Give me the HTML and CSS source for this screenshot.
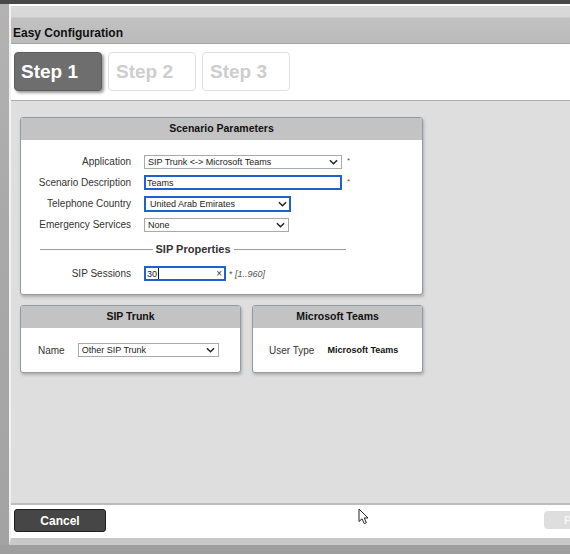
FILE: index.html
```html
<!DOCTYPE html>
<html lang="en">
<head>
<meta charset="utf-8">
<title>Easy Configuration</title>
<link rel="stylesheet" href="styles.css">
</head>
<body>
<div class="screen">
  <div class="topbar"></div>
  <div class="middle">
    <div class="backdrop"></div>
    <div class="window">
      <div class="titlebar"><span class="title">Easy Configuration</span></div>
      <div class="steps">
        <div class="step active">Step 1</div>
        <div class="step">Step 2</div>
        <div class="step">Step 3</div>
      </div>
      <div class="content">
        <section class="panel scenario">
          <div class="panel-head">Scenario Parameters</div>
          <div class="form">
            <div class="row">
              <label class="lbl">Application</label>
              <span class="selwrap w198">
                <select class="sel"><option>SIP Trunk &lt;-&gt; Microsoft Teams</option></select>
                <svg class="chev" viewBox="0 0 10 6"><path d="M1 1 L5 5 L9 1"/></svg>
              </span>
              <span class="req">*</span>
            </div>
            <div class="row">
              <label class="lbl">Scenario Description</label>
              <input class="inp w198" type="text" value="Teams">
              <span class="req">*</span>
            </div>
            <div class="row">
              <label class="lbl">Telephone Country</label>
              <span class="selwrap w147">
                <select class="sel focus"><option>United Arab Emirates</option></select>
                <svg class="chev" viewBox="0 0 10 6"><path d="M1 1 L5 5 L9 1"/></svg>
              </span>
            </div>
            <div class="row">
              <label class="lbl">Emergency Services</label>
              <span class="selwrap w145">
                <select class="sel"><option>None</option></select>
                <svg class="chev" viewBox="0 0 10 6"><path d="M1 1 L5 5 L9 1"/></svg>
              </span>
            </div>
            <div class="sep"><span class="sep-line"></span><span class="sep-text">SIP Properties</span><span class="sep-line"></span></div>
            <div class="row">
              <label class="lbl">SIP Sessions</label>
              <span class="inwrap w82">
                <input class="inp" type="text" value="30">
                <span class="caret"></span>
                <span class="clear">×</span>
              </span>
              <span class="hint">* <i>[1..960]</i></span>
            </div>
          </div>
        </section>
        <div class="pair">
          <section class="panel trunk">
            <div class="panel-head">SIP Trunk</div>
            <div class="simple">
              <label class="lbl-s">Name</label>
              <span class="selwrap w141">
                <select class="sel"><option>Other SIP Trunk</option></select>
                <svg class="chev" viewBox="0 0 10 6"><path d="M1 1 L5 5 L9 1"/></svg>
              </span>
            </div>
          </section>
          <section class="panel teams">
            <div class="panel-head">Microsoft Teams</div>
            <div class="simple">
              <span class="lbl-s">User Type</span>
              <span class="val">Microsoft Teams</span>
            </div>
          </section>
        </div>
      </div>
      <div class="footer">
        <button class="btn-cancel" type="button">Cancel</button>
        <button class="btn-next" type="button" disabled>Previous</button>
      </div>
    </div>
  </div>
  <svg class="cursor" viewBox="0 0 12 17" width="12" height="17"><path d="M1 1 L1 13.5 L4 10.8 L6.3 15.6 L8.4 14.7 L6.2 10 L10 10 Z"/></svg>
</div>
</body>
</html>
```
FILE: styles.css
```css
* { box-sizing: border-box; }
html, body { margin: 0; padding: 0; width: 570px; height: 554px; overflow: hidden; }
body { background: #9e9e9e; font-family: "Liberation Sans", Arial, sans-serif; color: #222; }

.screen { position: relative; height: 554px; display: flex; flex-direction: column; }
.topbar { height: 4px; flex: none; background: #484848; }
.middle { display: flex; height: 541px; flex: none; }
.backdrop { width: 9px; flex: none; background: linear-gradient(#b3b3b3, #a9a9a9 40%, #a3a3a3); }

.window {
  width: 600px; flex: none; display: flex; flex-direction: column;
  border-top: 2px solid #fff; border-left: 2px solid #f2f2f2;
  border-bottom: 7px solid #c9c9c9;
  background: #fff;
}

.titlebar {
  height: 38px; flex: none; display: flex; align-items: flex-end;
  padding: 0 0 3px 2px;
  background: linear-gradient(#dadada 0, #d7d7d7 11px, #c1c1c1 12px, #bbbbbb 100%);
  border-bottom: 1px solid #a4a497;
}
.title { font-weight: bold; font-size: 12px; line-height: 14px; color: #111; }

.steps {
  height: 57px; flex: none; display: flex; gap: 6px;
  padding: 8px 3px 0; background: #fff; border-bottom: 1px solid #ababab;
}
.step {
  width: 88px; height: 39px; border-radius: 4px; display: flex; align-items: center;
  padding-left: 7px; font-weight: bold; font-size: 19px;
  background: #fff; border: 1px solid #e0e0e0; color: #cdcdcd;
}
.step.active {
  background: #6e6e6e; border-color: #5c5c5c; color: #fff; padding-left: 6px;
  box-shadow: 2px 2px 3px rgba(0,0,0,0.4);
}

.content {
  height: 404px; flex: none; background: #dedede;
  padding: 16px 9px 0; border-bottom: 2px solid #bdbdbd;
  display: flex; flex-direction: column; gap: 10px;
}

.panel {
  background: #fff; border: 1px solid #8f9ba5; border-radius: 3px;
  box-shadow: 1px 2px 3px rgba(0,0,0,0.22); overflow: hidden;
}
.panel-head {
  height: 22px; line-height: 20px; text-align: center; background: #c3c3c3;
  font-weight: bold; font-size: 10.5px; color: #111;
}
.scenario { width: 403px; }
.form { padding: 11px 0 10px; }
.row { height: 21px; display: flex; align-items: center; }
.lbl { width: 110px; flex: none; text-align: right; margin-right: 13px; font-size: 10px; color: #333; }

.selwrap { position: relative; display: inline-flex; }
.sel {
  -webkit-appearance: none; appearance: none; width: 100%; height: 14px; margin: 0;
  border: 1px solid #a9a9a9; border-radius: 0; background: #fff;
  font-family: "Liberation Sans", Arial, sans-serif; font-size: 9px; color: #222;
  padding: 0 0 0 3px; line-height: 12px;
}
.sel.focus { height: 16px; border: 2px solid #1e62d0; padding-left: 4px; }
.chev { position: absolute; right: 4px; top: 50%; width: 9px; height: 6px; margin-top: -3px; }
.chev path { fill: none; stroke: #222; stroke-width: 1.6; }
.w198 { width: 198px; }
.w147 { width: 147px; }
.w145 { width: 145px; }
.w141 { width: 141px; }
.w82 { width: 82px; }

.inp {
  height: 15px; margin: 0; border: 2px solid #1e62d0; border-radius: 0; background: #fff;
  font-family: "Liberation Sans", Arial, sans-serif; font-size: 9px; color: #222;
  padding: 0 1px; outline: none;
}
.inwrap { position: relative; display: inline-flex; }
.inwrap .inp { width: 100%; }
.caret { position: absolute; left: 14px; top: 2px; width: 1px; height: 11px; background: #111; }
.clear { position: absolute; right: 4px; top: 0; font-size: 10px; line-height: 15px; color: #333; }
.req { margin-left: 5px; font-size: 8px; color: #555; align-self: flex-start; margin-top: 5px; }
.hint { margin-left: 3px; font-size: 9px; color: #555; }
.hint i { font-style: italic; }

.sep { height: 28px; width: 306px; margin-left: 19px; display: flex; align-items: center; }
.sep-line { flex: 1; height: 1px; background: #9b9b9b; }
.sep-text { padding: 0 3px; font-weight: bold; font-size: 11px; color: #333; }

.pair { display: flex; gap: 11px; align-items: stretch; }
.trunk { width: 221px; }
.teams { width: 171px; }
.simple { height: 44px; display: flex; align-items: center; padding-left: 16px; }
.lbl-s { font-size: 10px; color: #333; margin-right: 13px; }
.trunk .lbl-s { margin-right: 13px; }
.trunk .simple { padding-left: 17px; }
.val { font-weight: bold; font-size: 9px; color: #111; }

.footer { height: 33px; flex: none; display: flex; align-items: flex-start; padding: 4px 5px 0 3px; background: #fff; }
.btn-cancel {
  width: 92px; height: 23px; margin: 0; border: 1px solid #1e1e1e; border-radius: 3px;
  background: #464646; color: #fff; font-family: "Liberation Sans", Arial, sans-serif;
  font-weight: bold; font-size: 12px; padding: 0;
}
.btn-next {
  margin: 2px 0 0 auto; width: 60px; height: 18px; border: none; border-radius: 4px;
  background: #dedede; color: #f6f6f6; font-family: "Liberation Sans", Arial, sans-serif;
  font-weight: bold; font-size: 11px; padding: 0 0 0 20px; text-align: left;
}

.cursor { position: absolute; left: 358px; top: 508px; }
.cursor path { fill: #fff; stroke: #222; stroke-width: 1; stroke-linejoin: round; }
```
